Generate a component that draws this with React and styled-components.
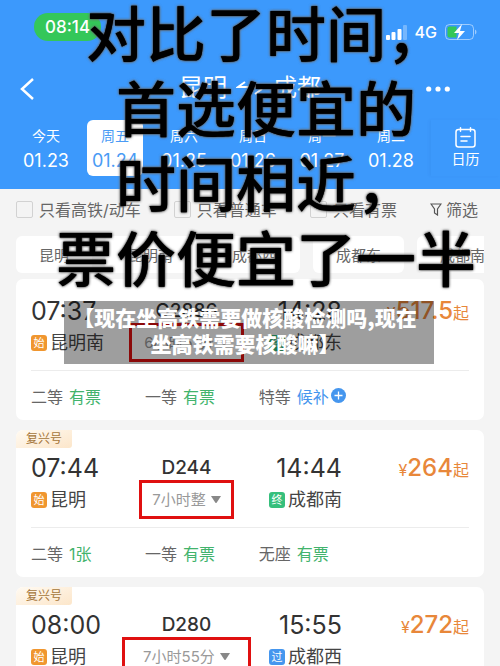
import React from 'react';
import styled, { createGlobalStyle } from 'styled-components';

const GlobalStyle = createGlobalStyle`
  * {
    box-sizing: border-box;
  }

  body {
    margin: 0;
    background: #f4f4f4;
    font-family: Inter, 'Noto Sans CJK SC', sans-serif;
    color: #333;
  }

  button {
    border: 0;
    padding: 0;
    background: none;
    color: inherit;
    font: inherit;
  }
`;

const Page = styled.div`
  position: relative;
  height: 100vh;
  overflow: hidden;
`;

const Header = styled.header`
  background: #3c99fc;
  color: white;
  padding: 13px 0;
`;

const StatusBar = styled.div`
  display: flex;
  justify-content: space-between;
  align-items: flex-end;
  padding: 0 23px 0 34px;
`;

const Clock = styled.span`
  background: #34c759;
  border-radius: 14px;
  padding: 0 11px;
  font-size: 17px;
  font-weight: 500;
  line-height: 28px;
`;

const Signals = styled.div`
  display: flex;
  align-items: center;
  gap: 8px;
  height: 18px;
  font-size: 16px;
  font-weight: 500;
`;

const NavBar = styled.nav`
  display: grid;
  grid-template-columns: 1fr auto 1fr;
  align-items: center;
  height: 63px;
  margin-top: 16px;
  padding: 0 20px;
`;

const BackButton = styled.button`
  justify-self: start;
  display: flex;
`;

const MoreButton = styled.button`
  justify-self: end;
  display: flex;
  margin-right: 30px;
`;

const Title = styled.h1`
  display: flex;
  align-items: center;
  gap: 9px;
  margin: 0;
  font-size: 24px;
  font-weight: 400;
  line-height: 32px;
  padding-bottom: 2px;
`;

const DateBar = styled.div`
  display: flex;
`;

const Days = styled.div`
  flex: 1;
  display: flex;
  gap: 13px;
  padding: 0 12px 0 18px;
`;

const Day = styled.button`
  flex: 1;
  display: flex;
  flex-direction: column;
  align-items: center;
  height: 56px;
  padding-top: 3px;
  border-radius: 6px;
  background: ${props => (props.$active ? 'white' : 'transparent')};
  color: ${props => (props.$active ? '#4a9bf5' : 'white')};
  font-size: 18px;
  line-height: 25px;
`;

const DayName = styled.span`
  font-size: 14px;
`;

const CalendarButton = styled.button`
  flex: 0 0 69px;
  display: flex;
  flex-direction: column;
  align-items: center;
  padding-top: 7px;
  font-size: 14px;
  line-height: 22px;
  box-shadow: -2px 0 3px rgba(0, 60, 140, 0.05);
`;

const Filters = styled.div`
  display: flex;
  justify-content: space-between;
  align-items: center;
  height: 40px;
  padding: 0 22px 0 16px;
  color: #666;
  font-size: 16px;
  white-space: nowrap;
`;

const FilterLabel = styled.label`
  display: flex;
  align-items: center;
  gap: 6px;
`;

const Checkbox = styled.input`
  appearance: none;
  width: 17px;
  height: 17px;
  margin: 0;
  border: 1px solid #d2d2d2;
  border-radius: 2px;
`;

const FilterButton = styled.button`
  display: flex;
  align-items: center;
  gap: 4px;
`;

const Stations = styled.div`
  display: flex;
  gap: 13px;
  margin: 7px 16px 6px;
  overflow: hidden;
`;

const StationChip = styled.button`
  flex: none;
  height: 37px;
  padding: 0 23px;
  border-radius: 6px;
  background: white;
  color: #666;
  font-size: 15px;
`;

const TrainList = styled.main`
  display: flex;
  flex-direction: column;
  gap: 10px;
  padding: 0 16px;
`;

const Card = styled.article`
  background: white;
  border-radius: 7px;
  padding: 0 15px;
`;

const Brand = styled.div`
  width: 56px;
  height: 18px;
  margin-left: -15px;
  border-radius: 7px 0 3px 0;
  background: linear-gradient(160deg, #fffaf2, #fce6ca);
  color: #a5763a;
  font-size: 12px;
  line-height: 18px;
  text-align: center;
`;

const Trip = styled.div`
  display: grid;
  grid-template-columns: minmax(0, 17fr) minmax(0, 37fr) minmax(0, 17fr) minmax(0, 29fr);
  padding: ${props => (props.$branded ? '4px' : '16px')} 0 11px;
  line-height: 32px;
  white-space: nowrap;
`;

const Stop = styled.div`
  display: flex;
  flex-direction: column;
  align-items: ${props => (props.$end ? 'flex-end' : 'flex-start')};
`;

const Time = styled.span`
  font-size: 25px;
`;

const Place = styled.span`
  display: flex;
  align-items: center;
  gap: 3px;
  color: #444;
  font-size: 18px;
`;

const badgeColors = {
  始: '#f0962f',
  终: '#36bf7c',
  过: '#4596ee'
};

const Badge = styled.span`
  width: 16px;
  height: 16px;
  border-radius: 3px;
  background: ${props => props.$color};
  color: white;
  font-size: 11px;
  line-height: 16px;
  text-align: center;
`;

const Train = styled.div`
  display: flex;
  flex-direction: column;
  align-items: center;
`;

const TrainNumber = styled.span`
  font-size: 19px;
  font-weight: 500;
`;

const Duration = styled.button`
  display: flex;
  align-items: center;
  gap: 5px;
  height: 39px;
  margin: -4px 0 -3px;
  padding: 0 ${props => props.$pad}px;
  border: 3px solid #e01010;
  color: #999;
  font-size: 15px;
`;

const Price = styled.div`
  color: #e8873a;
  font-size: 16px;
  text-align: right;
`;

const Amount = styled.span`
  font-size: 24px;
  font-weight: 500;
`;

const Seats = styled.div`
  display: grid;
  grid-template-columns: 26% 26% 1fr;
  align-items: center;
  height: 50px;
  border-top: 1px solid #ececec;
  color: #666;
  font-size: 16px;
`;

const Seat = styled.div`
  display: flex;
  align-items: center;
  gap: 6px;
`;

const SeatState = styled.span`
  display: flex;
  align-items: center;
  gap: 2px;
  color: ${props => (props.$waitlist ? '#4596ee' : '#42b36c')};
`;

const Note = styled.div`
  position: absolute;
  top: -7px;
  left: 32px;
  right: 0;
  color: black;
  font-family: 'Noto Sans CJK SC', sans-serif;
  font-size: 60px;
  font-weight: 500;
  line-height: 75px;
  text-align: center;
  white-space: nowrap;
  text-shadow: 0 0 1px black, 0 0 3px #666, 0 0 3px #777;
  pointer-events: none;
`;

const Caption = styled.div`
  position: absolute;
  top: 301px;
  left: 64px;
  right: 66px;
  padding: 3px 8px 8px 0;
  background: rgba(0, 0, 0, 0.38);
  color: white;
  font-family: 'Noto Sans CJK SC', sans-serif;
  font-size: 21px;
  font-weight: 900;
  line-height: 26px;
  text-align: center;
  white-space: nowrap;
`;

const days = [
  { name: '今天', date: '01.23' },
  { name: '周五', date: '01.24', active: true },
  { name: '周六', date: '01.25' },
  { name: '周日', date: '01.26' },
  { name: '周一', date: '01.27' },
  { name: '周二', date: '01.28' }
];

const filters = ['只看高铁/动车', '只看普通车', '只看有票'];

const stations = ['昆明', '昆明南', '成都西', '成都东', '成都南'];

const trains = [
  {
    number: 'G2886',
    duration: '6小时51分',
    pad: 12,
    from: { time: '07:37', badge: '始', name: '昆明南' },
    to: { time: '14:28', badge: '终', name: '成都东' },
    price: '517.5',
    seats: [['二等', '有票'], ['一等', '有票'], ['特等', '候补']]
  },
  {
    number: 'D244',
    brand: '复兴号',
    duration: '7小时整',
    pad: 10,
    from: { time: '07:44', badge: '始', name: '昆明' },
    to: { time: '14:44', badge: '终', name: '成都南' },
    price: '264',
    seats: [['二等', '1张'], ['一等', '有票'], ['无座', '有票']]
  },
  {
    number: 'D280',
    brand: '复兴号',
    duration: '7小时55分',
    pad: 18,
    from: { time: '08:00', badge: '始', name: '昆明' },
    to: { time: '15:55', badge: '过', name: '成都西' },
    price: '272',
    seats: []
  }
];

function SignalIcon() {
  return (
    <svg width="21" height="15" viewBox="0 0 21 15" fill="white">
      <rect x="0" y="10" width="4" height="5" rx="1" />
      <rect x="5.5" y="7" width="4" height="8" rx="1" />
      <rect x="11.5" y="4" width="4" height="11" rx="1" />
      <rect x="17" y="0" width="4" height="15" rx="1" opacity="0.3" />
    </svg>
  );
}

function BatteryIcon() {
  return (
    <svg width="32" height="16" viewBox="0 0 32 16">
      <rect x="0.5" y="0.5" width="28" height="15" rx="4" fill="none" stroke="white" opacity="0.5" />
      <path d="M4.500 2.500h7v11h-7a2 2 0 0 1-2-2v-7a2 2 0 0 1 2-2z" fill="#34c759" />
      <path d="M30 5.500c2 1 2 4 0 5z" fill="white" opacity="0.5" />
      <path d="M17 0L9 9h5l-2 7 8-9h-5z" fill="white" />
    </svg>
  );
}

function SwapIcon() {
  return (
    <svg width="28" height="14" viewBox="0 0 28 14" fill="none" stroke="white" strokeWidth="2">
      <path d="M9 1L2 6h24M19 13l7-5" />
    </svg>
  );
}

function CalendarIcon() {
  return (
    <svg width="21" height="21" viewBox="0 0 21 21" fill="none" stroke="white" strokeWidth="1.5" strokeLinecap="round">
      <rect x="1" y="2.500" width="19" height="17.500" rx="2.500" />
      <path d="M5.500 0.800v3.500M15.500 0.800v3.500M6 9.500h9M6 14h6" />
    </svg>
  );
}

function PlusIcon() {
  return (
    <svg width="15" height="15" viewBox="0 0 15 15">
      <circle cx="7.5" cy="7.5" r="7.5" fill="#4596ee" />
      <path d="M7.500 3.500v8M3.500 7.500h8" stroke="white" strokeWidth="1.3" />
    </svg>
  );
}

function StopInfo({ stop, end }) {
  return (
    <Stop $end={end}>
      <Time>{stop.time}</Time>
      <Place>
        <Badge $color={badgeColors[stop.badge]}>{stop.badge}</Badge>
        {stop.name}
      </Place>
    </Stop>
  );
}

function TrainCard({ train }) {
  return (
    <Card>
      {train.brand && <Brand>{train.brand}</Brand>}
      <Trip $branded={Boolean(train.brand)}>
        <StopInfo stop={train.from} />
        <Train>
          <TrainNumber>{train.number}</TrainNumber>
          <Duration $pad={train.pad}>
            {train.duration}
            <svg width="10" height="7" viewBox="0 0 10 7" fill="#888">
              <path d="M0 0h10L5.800 6.500a1 1 0 0 1-1.600 0z" />
            </svg>
          </Duration>
        </Train>
        <StopInfo stop={train.to} end />
        <Price>
          ¥<Amount>{train.price}</Amount>起
        </Price>
      </Trip>
      {train.seats.length > 0 && (
        <Seats>
          {train.seats.map(([name, state]) => (
            <Seat key={name}>
              {name}
              <SeatState $waitlist={state === '候补'}>
                {state}
                {state === '候补' && <PlusIcon />}
              </SeatState>
            </Seat>
          ))}
        </Seats>
      )}
    </Card>
  );
}

export default function App() {
  return (
    <Page>
      <GlobalStyle />
      <Header>
        <StatusBar>
          <Clock>08:14</Clock>
          <Signals>
            <SignalIcon />
            4G
            <BatteryIcon />
          </Signals>
        </StatusBar>
        <NavBar>
          <BackButton aria-label="返回">
            <svg width="14" height="22" viewBox="0 0 14 22" fill="none" stroke="white" strokeWidth="2.5">
              <path d="M13 1L2 11l11 10" />
            </svg>
          </BackButton>
          <Title>
            昆明
            <SwapIcon />
            成都
          </Title>
          <MoreButton aria-label="更多">
            <svg width="24" height="6" viewBox="0 0 24 6" fill="white">
              <circle cx="2.7" cy="3" r="2.6" />
              <circle cx="12" cy="3" r="2.6" />
              <circle cx="21.300" cy="3" r="2.6" />
            </svg>
          </MoreButton>
        </NavBar>
        <DateBar>
          <Days>
            {days.map(day => (
              <Day key={day.date} $active={day.active}>
                <DayName>{day.name}</DayName>
                {day.date}
              </Day>
            ))}
          </Days>
          <CalendarButton>
            <CalendarIcon />
            日历
          </CalendarButton>
        </DateBar>
      </Header>

      <Filters>
        {filters.map(filter => (
          <FilterLabel key={filter}>
            <Checkbox type="checkbox" />
            {filter}
          </FilterLabel>
        ))}
        <FilterButton>
          <svg width="12" height="13" viewBox="0 0 12 13" fill="none" stroke="#555" strokeWidth="1.2">
            <path d="M1 1h10L7.500 6v6l-3-2V6z" />
          </svg>
          筛选
        </FilterButton>
      </Filters>

      <Stations>
        {stations.map(station => (
          <StationChip key={station}>{station}</StationChip>
        ))}
      </Stations>

      <TrainList>
        {trains.map(train => (
          <TrainCard key={train.number} train={train} />
        ))}
      </TrainList>

      <Note>
        对比了时间，
        <br />
        首选便宜的
        <br />
        时间相近，
        <br />
        票价便宜了一半
      </Note>

      <Caption>
        【现在坐高铁需要做核酸检测吗,现在
        <br />
        坐高铁需要核酸嘛】
      </Caption>
    </Page>
  );
}
